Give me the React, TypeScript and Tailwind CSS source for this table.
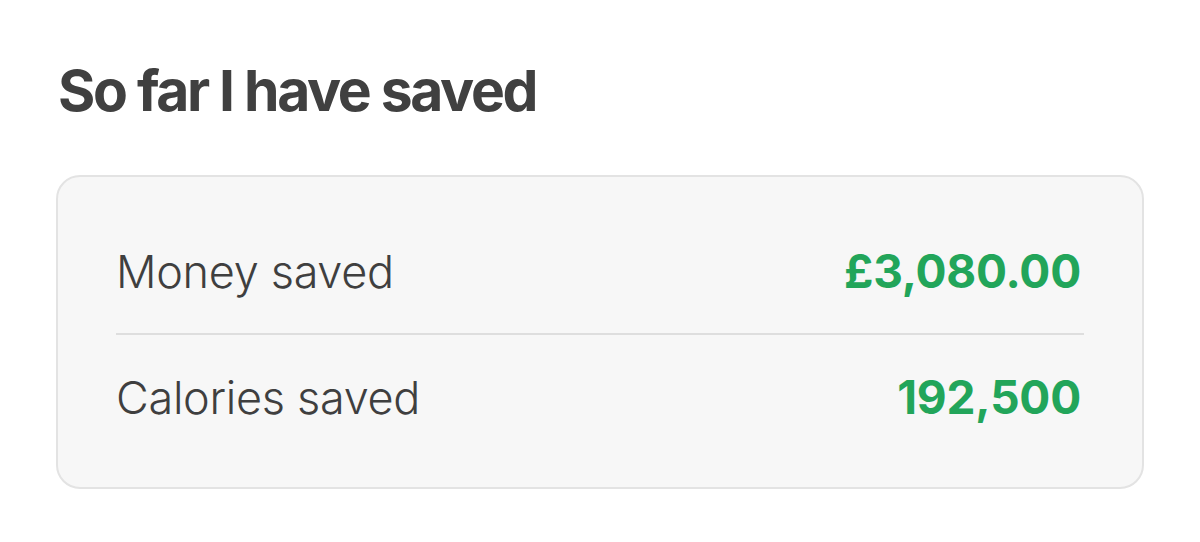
export default function App() {
  const rows = [
    { label: "Money saved", value: "£3,080.00" },
    { label: "Calories saved", value: "192,500" },
  ];

  return (
    <div className="w-[1200px] h-[542px] bg-white px-[56px] pt-[58px] font-['Inter','Liberation_Sans',sans-serif]">
      <h1 className="text-[57px] leading-[66px] font-bold tracking-[-2.3px] text-[#404040] pl-[2px]">
        So far I have saved
      </h1>
      <div className="mt-[51px] w-[1088px] rounded-[24px] border-2 border-[#e3e3e3] bg-[#f7f7f7] px-[58px] pt-[33px] pb-[27px]">
        {rows.map((row, i) => (
          <div
            key={row.label}
            className={
              "flex h-[125px] items-center justify-between " +
              (i === 0 ? "border-b-2 border-[#dedede]" : "")
            }
          >
            <span className="text-[45px] font-light text-[#3f3f3f] tracking-[-0.3px]">{row.label}</span>
            <span className="text-[46px] font-bold text-[#22a55a] tracking-[-0.2px] pr-[3px]">{row.value}</span>
          </div>
        ))}
      </div>
    </div>
  );
}
